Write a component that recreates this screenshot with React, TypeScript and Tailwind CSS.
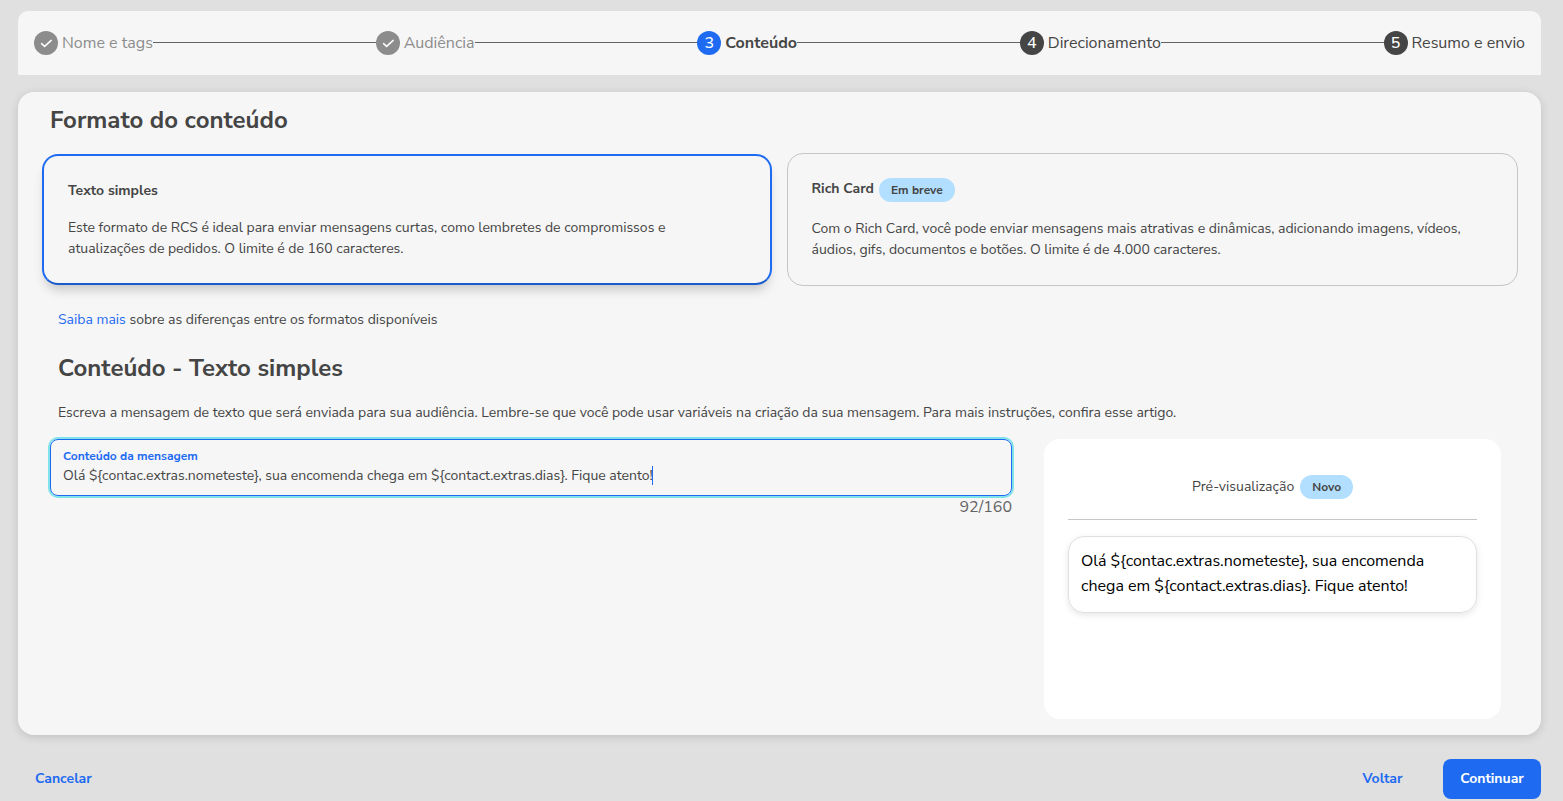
import { Fragment, type ReactNode } from 'react'

type Step = { label: string; state: 'done' | 'active' | 'todo' }

const steps: Step[] = [
  { label: 'Nome e tags', state: 'done' },
  { label: 'Audiência', state: 'done' },
  { label: 'Conteúdo', state: 'active' },
  { label: 'Direcionamento', state: 'todo' },
  { label: 'Resumo e envio', state: 'todo' },
]

const circleColor = { done: 'bg-[#8c8c8c]', active: 'bg-[#1e6bf1]', todo: 'bg-[#454545]' }
const labelColor = { done: 'text-[#8c8c8c]', active: 'font-bold text-[#454545]', todo: 'text-[#454545]' }

const message = 'Olá ${contac.extras.nometeste}, sua encomenda chega em ${contact.extras.dias}. Fique atento!'

function Stepper() {
  return (
    <nav className="flex h-16 items-center rounded-t-[10px] bg-[#f6f6f6] px-4 text-base">
      {steps.map((step, i) => (
        <Fragment key={step.label}>
          {i > 0 && <div className="-mt-px h-px flex-1 bg-[#636363]" />}
          <div className={`flex size-6 shrink-0 items-center justify-center rounded-full font-medium text-white ${circleColor[step.state]}`}>
            {step.state === 'done' ? (
              <svg viewBox="0 0 24 24" className="size-6" fill="none" stroke="currentColor" strokeWidth="1.5" strokeLinecap="round">
                <path d="M7.6 12.6l3 2.8 6.6-6" />
              </svg>
            ) : (
              <span>{i + 1}</span>
            )}
          </div>
          <span className={`ml-1 whitespace-nowrap ${labelColor[step.state]}`}>{step.label}</span>
        </Fragment>
      ))}
    </nav>
  )
}

function Tag({ children }: { children: ReactNode }) {
  return <span className="flex h-6 items-center rounded-full bg-[#b2dfff] px-3 text-xs font-bold">{children}</span>
}

export default function App() {
  return (
    <div className="flex h-[801px] flex-col overflow-hidden bg-[#e0e0e0] pt-[11px] pr-[22px] pl-[18px] font-['Nunito_Sans',Nunito,sans-serif] text-sm text-[#454545]">
      <Stepper />

      <main className="mt-[17px] h-[643px] rounded-2xl bg-[#f6f6f6] pr-[23px] pl-6 shadow-[0_2px_10px_rgba(0,0,0,0.14)]">
        <h1 className="pt-3 pl-2 text-2xl leading-8 font-bold">Formato do conteúdo</h1>

        <div className="mt-[17px] grid grid-cols-[730px_731px] items-center gap-[15px]">
          <section className="h-[131px] rounded-2xl border-2 border-[#1e6bf1] border-b-[#1a5bcc] px-6 pt-6 shadow-[0_8px_12px_-4px_rgba(0,0,0,0.22)]">
            <h2 className="leading-[21px] font-bold">Texto simples</h2>
            <p className="mt-4 leading-[21px]">
              Este formato de RCS é ideal para enviar mensagens curtas, como lembretes de compromissos e
              <br />
              atualizações de pedidos. O limite é de 160 caracteres.
            </p>
          </section>
          <section className="h-[133px] rounded-2xl border border-[#c6c6c6] pt-6 pr-6 pl-[23.5px]">
            <div className="flex gap-[5px]">
              <h2 className="leading-[21px] font-bold">Rich Card</h2>
              <Tag>Em breve</Tag>
            </div>
            <p className="mt-4 leading-[21px]">
              Com o Rich Card, você pode enviar mensagens mais atrativas e dinâmicas, adicionando imagens, vídeos,
              <br />
              áudios, gifs, documentos e botões. O limite é de 4.000 caracteres.
            </p>
          </section>
        </div>

        <p className="mt-[23px] pl-4 leading-[21px]">
          <a className="text-[#1e6bf1]">Saiba mais</a> sobre as diferenças entre os formatos disponíveis
        </p>

        <h1 className="mt-[22px] pl-4 text-2xl leading-8 font-bold">Conteúdo - Texto simples</h1>
        <p className="mt-[18px] pl-4 leading-[21px]">
          Escreva a mensagem de texto que será enviada para sua audiência. Lembre-se que você pode usar variáveis na
          criação da sua mensagem. Para mais instruções, confira esse artigo.
        </p>

        <div className="mt-4 flex items-start pl-2">
          <div className="w-[962px]">
            <div className="h-[57px] rounded-lg border border-[#1e6bf1] px-3 pt-[7px] ring-2 ring-[#80e3eb]">
              <div className="text-xs leading-[18px] font-bold text-[#1e6bf1]">Conteúdo da mensagem</div>
              <div className="flex items-center leading-[21px]">
                <span>{message}</span>
                <span className="-ml-px h-[19px] w-px bg-[#1e6bf1]" />
              </div>
            </div>
            <div className="text-right text-base leading-[22px] text-[#636363]">92/160</div>
          </div>

          <aside className="ml-8 h-[280px] w-[457px] rounded-2xl bg-white px-6 pt-9">
            <div className="flex justify-center gap-1.5 border-b border-[#c6c6c6] pb-5">
              <span className="leading-[23px]">Pré-visualização</span>
              <Tag>Novo</Tag>
            </div>
            <div className="mt-4 h-[77px] rounded-2xl border border-[#e0e0e0] px-3 pt-3 text-base leading-[25px] text-black shadow-[0_2px_6px_rgba(0,0,0,0.1)]">
              {message}
            </div>
          </aside>
        </div>
      </main>

      <footer className="mt-6 flex h-10 items-center pl-[17px] font-bold text-[#1e6bf1]">
        <button>Cancelar</button>
        <button className="mr-[40.5px] ml-auto">Voltar</button>
        <button className="h-10 w-[98px] rounded-lg bg-[#1e6bf1] text-white">Continuar</button>
      </footer>
    </div>
  )
}
